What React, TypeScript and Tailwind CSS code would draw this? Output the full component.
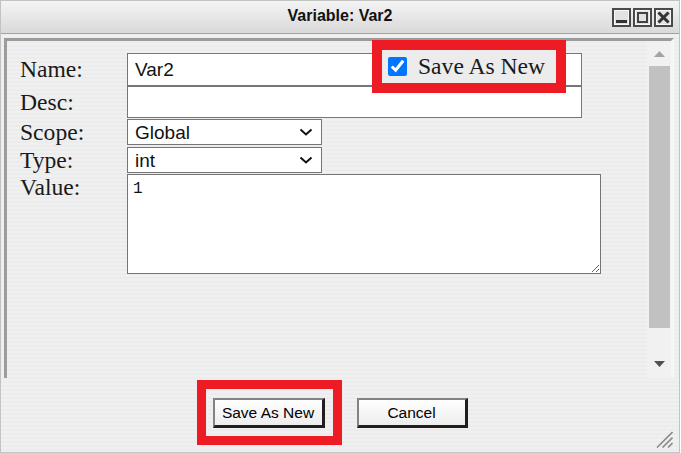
import React from "react";

function TitleButton({ kind }: { kind: "min" | "max" | "close" }) {
  return (
    <svg width="19" height="19" viewBox="0 0 19 19">
      <rect x="1" y="1" width="17" height="17" fill="#e2e2e2" stroke="#4a4a4a" strokeWidth="2" />
      <rect x="2.5" y="2.5" width="14" height="14" fill="none" stroke="#f8f8f8" strokeWidth="1" />
      {kind === "min" && <rect x="4" y="12" width="11" height="3" fill="#333" />}
      {kind === "max" && <rect x="5" y="5" width="9" height="9" fill="none" stroke="#444" strokeWidth="2" />}
      {kind === "close" && (
        <g stroke="#333" strokeWidth="3" strokeLinecap="square">
          <line x1="5.5" y1="5.5" x2="13.5" y2="13.5" />
          <line x1="13.5" y1="5.5" x2="5.5" y2="13.5" />
        </g>
      )}
    </svg>
  );
}

function Chevron() {
  return (
    <svg width="14" height="8" viewBox="0 0 14 8">
      <polyline points="1.5,1.5 7,6.5 12.5,1.5" fill="none" stroke="#111" strokeWidth="2" />
    </svg>
  );
}

function FakeSelect({ value }: { value: string }) {
  return (
    <div className="w-[195px] h-[26px] border border-[#767676] bg-white flex items-center justify-between pl-[7px] pr-[8px] text-[19px] text-[#111] leading-none">
      <span>{value}</span>
      <Chevron />
    </div>
  );
}

function Label({ children }: { children: React.ReactNode }) {
  return (
    <div className="w-[107px] shrink-0 font-['Liberation_Serif',serif] text-[23.6px] leading-[27px] text-[#1a1a1a]">
      {children}
    </div>
  );
}

function WinButton({ children, annotated }: { children: React.ReactNode; annotated?: boolean }) {
  return (
    <button className="relative h-[30px] border-t-2 border-l-2 border-b-[3px] border-r-[3px] border-t-[#838383] border-l-[#838383] border-b-[#1f1f1f] border-r-[#1f1f1f] bg-linear-to-b from-white to-[#ededed] text-[15.5px] text-black leading-none">
      {children}
      {annotated && (
        <span className="pointer-events-none absolute -left-[18px] -top-[20px] -right-[20px] -bottom-[20px] border-[9px] border-[#ed1c24]" />
      )}
    </button>
  );
}

export default function App() {
  return (
    <div className="w-[681px] h-[453px] bg-white font-['Liberation_Sans',Arial,sans-serif]">
      <div className="relative w-[680px] h-[453px] border border-[#c2c2c2] flex flex-col bg-[repeating-linear-gradient(180deg,#ececec_0px,#ececec_2px,#f0f0f0_2px,#f0f0f0_4px)]">
        {/* Title bar */}
        <div className="h-[33px] shrink-0 border-b border-[#a3a3a3] bg-linear-to-b from-[#f4f4f4] to-[#d9d9d9] grid grid-cols-[1fr_auto_1fr] items-center">
          <div />
          <div className="pb-[3px] text-[16px] font-bold text-[#111] leading-none">Variable: Var2</div>
          <div className="flex justify-end gap-[2px] pr-[6px] pt-[1px]">
            <TitleButton kind="min" />
            <TitleButton kind="max" />
            <TitleButton kind="close" />
          </div>
        </div>

        {/* Panel */}
        <div className="mt-[4px] ml-[3px] mr-[5px] h-[340px] shrink-0 border-t-[3px] border-l-[3px] border-r-[3px] border-t-[#9c9c9c] border-l-[#9c9c9c] border-r-[#f6f6f6] flex">
          <div className="flex-1 pl-[13px] pt-[12px] flex flex-col">
            <div className="flex items-center h-[33px]">
              <Label>Name:</Label>
              <input
                readOnly
                value="Var2"
                className="w-[455px] h-[33px] border border-[#767676] bg-white px-[7px] text-[19px] text-[#111] outline-none"
              />
            </div>
            <div className="flex items-center h-[32px]">
              <Label>Desc:</Label>
              <input
                readOnly
                value=""
                className="w-[455px] h-[32px] border border-[#767676] bg-white px-[7px] text-[19px] text-[#111] outline-none"
              />
            </div>
            <div className="flex items-center h-[26px] mt-[1px]">
              <Label>Scope:</Label>
              <FakeSelect value="Global" />
            </div>
            <div className="flex items-center h-[26px] mt-[2px]">
              <Label>Type:</Label>
              <FakeSelect value="int" />
            </div>
            <div className="flex items-start mt-[1px]">
              <Label>Value:</Label>
              <textarea
                readOnly
                value="1"
                className="resize w-[474px] h-[100px] border border-[#767676] bg-white px-[5px] py-[5px] font-['Liberation_Mono',monospace] text-[16px] leading-[18px] text-[#111] outline-none"
              />
            </div>
          </div>

          {/* Scrollbar */}
          <div className="w-[24px] shrink-0 bg-[#f1f1f1] flex flex-col">
            <div className="h-[25px] flex items-center justify-center">
              <svg width="11" height="6" viewBox="0 0 11 6">
                <polygon points="0,6 11,6 5.5,0" fill="#a3a3a3" />
              </svg>
            </div>
            <div className="h-[262px] ml-[2px] mr-[1px] bg-[#c1c1c1]" />
            <div className="flex-1" />
            <div className="h-[29px] flex items-center justify-center">
              <svg width="11" height="6" viewBox="0 0 11 6">
                <polygon points="0,0 11,0 5.5,6" fill="#505050" />
              </svg>
            </div>
          </div>
        </div>

        {/* Footer buttons */}
        <div className="flex-1 flex justify-center items-start gap-[32px] pt-[20px]">
          <div className="w-[112px]">
            <WinButton annotated>
              <span className="block w-[107px]">Save As New</span>
            </WinButton>
          </div>
          <div className="w-[111px]">
            <WinButton>
              <span className="block w-[106px]">Cancel</span>
            </WinButton>
          </div>
        </div>

        {/* Annotated checkbox overlay */}
        <div className="absolute left-[371px] top-[39px] w-[194px] h-[53px] border-[10px] border-[#ed1c24] bg-[#ececec] flex items-center pl-[6px] gap-[11px]">
          <input type="checkbox" defaultChecked className="w-[19px] h-[19px] m-0 shrink-0" />
          <span className="font-['Liberation_Serif',serif] text-[23.6px] leading-[27px] text-[#1a1a1a] whitespace-nowrap">Save As New</span>
        </div>

        {/* Resize grip */}
        <svg className="absolute right-[6px] bottom-[4px]" width="17" height="17" viewBox="0 0 17 17">
          <g stroke="#8a8a8a" strokeWidth="1.6">
            <line x1="16.5" y1="1" x2="1" y2="16.5" />
            <line x1="16.5" y1="6.5" x2="6.5" y2="16.5" />
            <line x1="16.5" y1="12" x2="12" y2="16.5" />
          </g>
        </svg>
      </div>
    </div>
  );
}
